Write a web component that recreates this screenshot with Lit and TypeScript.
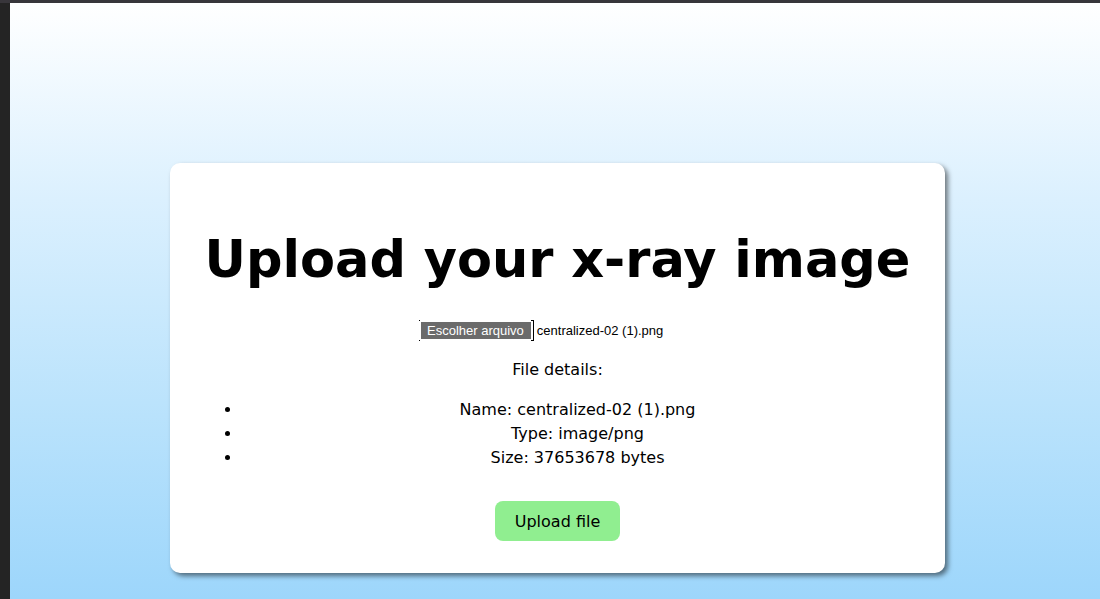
import { LitElement, html, css } from "lit";
import { customElement, state } from "lit/decorators.js";

interface FileInfo {
  name: string;
  type: string;
  size: number;
}

@customElement("app-root")
export class AppRoot extends LitElement {
  static styles = css`
    :host {
      display: block;
      box-sizing: border-box;
      min-height: 100vh;
      border-top: 3px solid #38363b;
      background: #242424;
      color: #000;
      font: 16px/24px Verdana, "DejaVu Sans", sans-serif;
    }
    .page {
      box-sizing: border-box;
      min-height: calc(100vh - 3px);
      margin-left: 10px;
      padding: 160px 155px 26px 160px;
      background: linear-gradient(#fff, #dbf0fe 33%, #bbe3fc 67%, #9dd6fb);
    }
    .card {
      display: flex;
      flex-direction: column;
      align-items: center;
      padding: 64px 32px 32px;
      border-radius: 10px;
      background: #fff;
      box-shadow: 3px 3px 5px rgba(0, 0, 0, 0.5);
      text-align: center;
    }
    .title {
      margin: 0;
      font-size: 51px;
      line-height: 65px;
      font-weight: bold;
      white-space: nowrap;
    }
    .picker {
      position: relative;
      display: flex;
      align-items: center;
      gap: 3px;
      width: 277px;
      margin-top: 28px;
      font: 13px/21px "Liberation Sans", Arial, sans-serif;
    }
    .native {
      position: absolute;
      inset: 0;
      width: 100%;
      opacity: 0;
      cursor: pointer;
    }
    .choose {
      display: flex;
      box-sizing: border-box;
      height: 21px;
      padding: 2px;
      border-right: 1px solid #000;
      background:
        linear-gradient(#000, #000) left top / 1px 1px no-repeat,
        linear-gradient(#000, #000) left bottom / 1px 1px no-repeat,
        linear-gradient(#000, #000) right top / 2px 1px no-repeat,
        linear-gradient(#000, #000) right bottom / 2px 1px no-repeat;
    }
    .choose-label {
      padding: 0 7px 0 6px;
      background: #6b6b6b;
      color: #fff;
      line-height: 17px;
    }
    .caption {
      margin: 17px 0 0;
    }
    .details {
      align-self: stretch;
      margin: 16px 0 0;
      padding-left: 40px;
    }
    .submit {
      height: 40px;
      margin-top: 31px;
      padding: 2px 20px 0;
      border: 0;
      border-radius: 8px;
      background: #90ee90;
      color: #000;
      font: inherit;
      cursor: pointer;
    }
  `;

  @state() private file: FileInfo = {
    name: "centralized-02 (1).png",
    type: "image/png",
    size: 37653678,
  };

  private pick(event: Event) {
    const chosen = (event.target as HTMLInputElement).files?.[0];
    if (chosen) {
      this.file = { name: chosen.name, type: chosen.type, size: chosen.size };
    }
  }

  render() {
    const { name, type, size } = this.file;
    return html`
      <main class="page">
        <section class="card">
          <h1 class="title">Upload your x-ray image</h1>
          <label class="picker" for="file">
            <input class="native" id="file" type="file" @change=${this.pick} />
            <span class="choose"><span class="choose-label">Escolher arquivo</span></span>
            <span>${name}</span>
          </label>
          <p class="caption">File details:</p>
          <ul class="details">
            <li>Name: ${name}</li>
            <li>Type: ${type}</li>
            <li>Size: ${size} bytes</li>
          </ul>
          <button class="submit" type="button">Upload file</button>
        </section>
      </main>
    `;
  }
}
